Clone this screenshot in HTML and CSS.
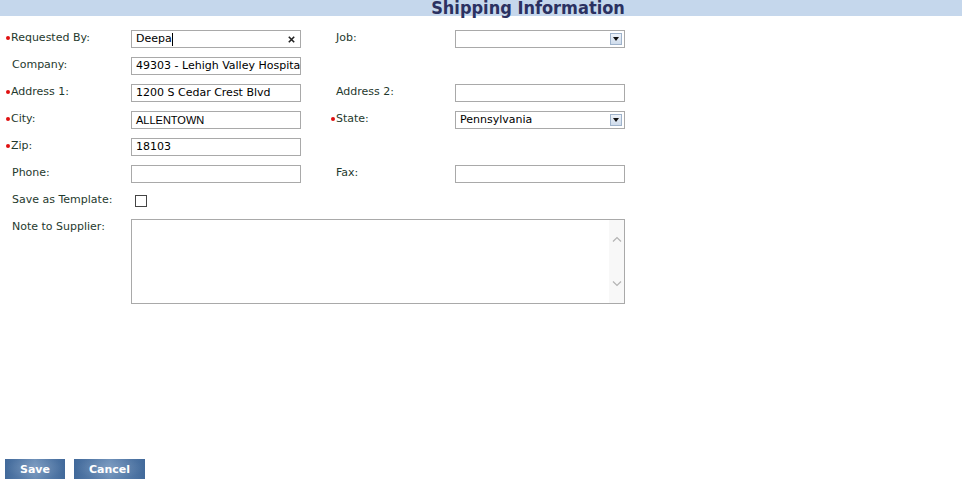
FILE: index.html
```html
<!DOCTYPE html>
<html>
<head>
<meta charset="utf-8">
<link rel="stylesheet" href="styles.css">
</head>
<body>
<div class="header"><h1 class="title">Shipping Information</h1></div>
<div class="form">
  <div class="label"><span class="req"></span>Requested By:</div>
  <div class="field"><span class="val">Deepa</span><span class="caret"></span>
    <svg class="clear" width="7" height="7" viewBox="0 0 7 7"><path d="M0.8 0.8 L6.2 6.2 M6.2 0.8 L0.8 6.2" stroke="#222" stroke-width="1.6"/></svg>
  </div>
  <div class="label label2">Job:</div>
  <div class="field select"><span class="val"></span><span class="arrow"><svg width="6" height="4" viewBox="0 0 6 4"><path d="M0 0 H6 L3 4 Z" fill="#111"/></svg></span></div>

  <div class="label plain">Company:</div>
  <div class="field"><span class="val">49303 - Lehigh Valley Hospita</span></div>
  <div class="empty"></div><div class="empty"></div>

  <div class="label"><span class="req"></span>Address 1:</div>
  <div class="field"><span class="val">1200 S Cedar Crest Blvd</span></div>
  <div class="label label2">Address 2:</div>
  <div class="field"></div>

  <div class="label"><span class="req"></span>City:</div>
  <div class="field"><span class="val arial">ALLENTOWN</span></div>
  <div class="label label2"><span class="req"></span>State:</div>
  <div class="field select"><span class="val">Pennsylvania</span><span class="arrow"><svg width="6" height="4" viewBox="0 0 6 4"><path d="M0 0 H6 L3 4 Z" fill="#111"/></svg></span></div>

  <div class="label"><span class="req"></span>Zip:</div>
  <div class="field"><span class="val">18103</span></div>
  <div class="empty"></div><div class="empty"></div>

  <div class="label plain">Phone:</div>
  <div class="field"></div>
  <div class="label label2">Fax:</div>
  <div class="field"></div>

  <div class="label plain">Save as Template:</div>
  <div class="checkcell"><span class="checkbox"></span></div>
  <div class="empty"></div><div class="empty"></div>

  <div class="label plain">Note to Supplier:</div>
  <div class="textarea">
    <div class="scroll">
      <svg width="10" height="6" viewBox="0 0 10 6"><path d="M1 5.5 L5 1.5 L9 5.5" fill="none" stroke="#b4b4b4" stroke-width="1.2"/></svg>
      <svg width="10" height="6" viewBox="0 0 10 6"><path d="M1 0.5 L5 4.5 L9 0.5" fill="none" stroke="#b4b4b4" stroke-width="1.2"/></svg>
    </div>
  </div>
</div>
<div class="actions">
  <button class="btn btn-save">Save</button>
  <button class="btn btn-cancel">Cancel</button>
</div>
</body>
</html>
```
FILE: styles.css
```css
html, body {
  margin: 0;
  padding: 0;
  background: #ffffff;
}
body {
  width: 962px;
  height: 486px;
  overflow: hidden;
  font-family: "DejaVu Sans", Verdana, sans-serif;
  font-size: 11px;
  color: #1f3a2e;
}
.header {
  height: 16px;
  background: #c5d7ec;
}
.title {
  margin: 0;
  padding-left: 94px;
  text-align: center;
  font-family: "DejaVu Sans Condensed", "DejaVu Sans", sans-serif;
  font-weight: bold;
  font-size: 18px;
  line-height: 15px;
  color: #2b3161;
  white-space: nowrap;
}
.form {
  display: grid;
  grid-template-columns: 126px 170px 154px 170px;
  grid-auto-rows: minmax(18px, auto);
  row-gap: 9px;
  padding: 14px 0 0 5px;
}
.label {
  display: flex;
  align-items: flex-start;
  padding-top: 1px;
  line-height: 14px;
  white-space: nowrap;
  padding-left: 6px;
}
.label.plain {
  padding-left: 7px;
}
.label2 {
  padding-left: 35px;
}
.label:has(.req) {
  padding-left: 0;
}
.label2:has(.req) {
  padding-left: 29px;
}
.req {
  width: 6px;
  height: 14px;
  flex: none;
  position: relative;
}
.req::before {
  content: "";
  position: absolute;
  left: 1px;
  top: 5px;
  width: 4px;
  height: 4px;
  border-radius: 50%;
  background: #e01010;
}
.field {
  box-sizing: border-box;
  height: 18px;
  border: 1px solid #a9a9a9;
  background: #fff;
  display: flex;
  align-items: center;
  padding-left: 4px;
  color: #000;
  position: relative;
  overflow: hidden;
  white-space: nowrap;
}
.val {
  line-height: 16px;
}
.arial {
  font-family: "Liberation Sans", Arial, sans-serif;
  font-size: 11px;
}
.caret {
  display: inline-block;
  width: 1px;
  height: 13px;
  background: #000;
}
.clear {
  margin-left: auto;
  margin-right: 5px;
}
.select .arrow {
  margin-left: auto;
  margin-right: 2px;
  box-sizing: border-box;
  width: 12px;
  height: 12px;
  border: 1px solid #9fb3cb;
  background: linear-gradient(#edf2f9, #cfdcec);
  display: flex;
  align-items: center;
  justify-content: center;
}
.checkcell {
  display: flex;
  align-items: flex-start;
}
.checkbox {
  box-sizing: border-box;
  width: 12px;
  height: 12px;
  margin: 3px 0 0 4px;
  border: 1px solid #444;
  background: #fff;
}
.textarea {
  grid-column: 2 / 5;
  box-sizing: border-box;
  height: 85px;
  border: 1px solid #a9a9a9;
  background: #fff;
  display: flex;
  justify-content: flex-end;
}
.scroll {
  width: 15px;
  background: #f8f8f8;
  display: flex;
  flex-direction: column;
  align-items: center;
  justify-content: space-between;
  padding: 16px 0 16px;
  box-sizing: border-box;
}
.actions {
  display: flex;
  gap: 9px;
  padding-left: 5px;
  margin-top: 155px;
}
.btn {
  height: 20px;
  border: none;
  padding: 0;
  color: #fff;
  font-family: "DejaVu Sans", Verdana, sans-serif;
  font-weight: bold;
  font-size: 11px;
  background:
    radial-gradient(ellipse at 50% 45%, rgba(255,255,255,0.14), rgba(255,255,255,0) 70%),
    linear-gradient(to right, #41699a, #6a8db7 50%, #41699a);
}
.btn-save { width: 60px; }
.btn-cancel { width: 71px; }
```
